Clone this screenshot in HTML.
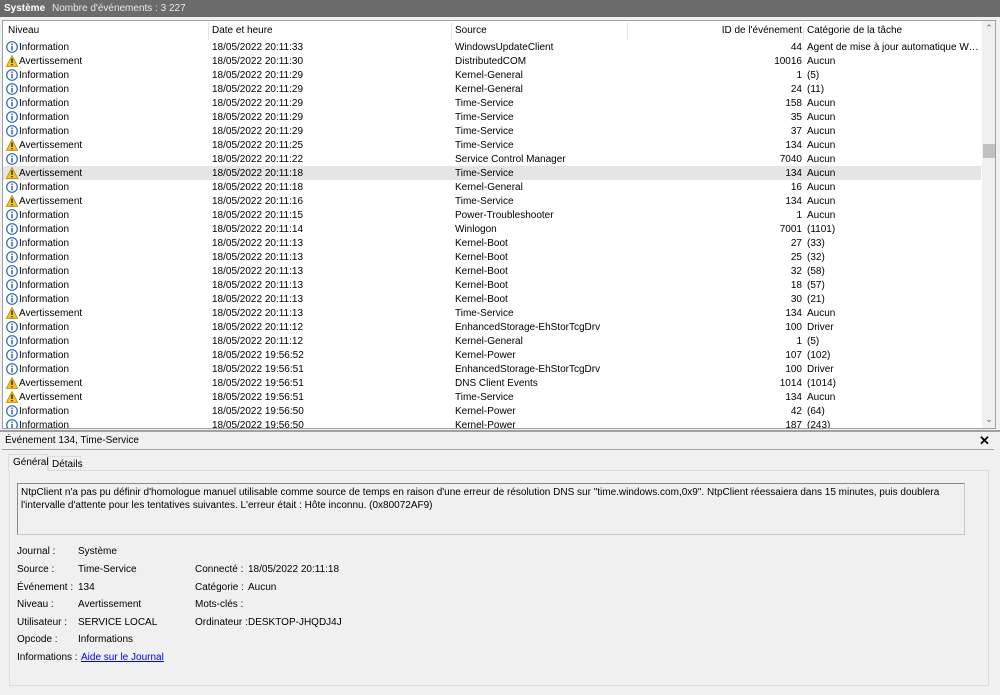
<!DOCTYPE html>
<html><head><meta charset="utf-8"><style>
*{margin:0;padding:0;box-sizing:border-box}
body{width:1000px;height:695px;background:#f0f0f0;font-family:"Liberation Sans",sans-serif;font-size:10px;color:#000;position:relative;overflow:hidden}
.tb{position:absolute;left:0;top:0;width:1000px;height:17px;background:#6b6b6b;color:#fff;line-height:17px}
.tb b{position:absolute;left:4px;font-weight:bold}
.tb span{position:absolute;left:52px;color:#e8e8e8}
.list{position:absolute;left:2px;top:20px;width:994px;height:409px;background:#fff;border:1px solid #a0a0a0;overflow:hidden}
.hd{position:absolute;left:0;top:1px;width:978px;height:18px;line-height:18px}
.hd span{position:absolute;top:0}
.sep{position:absolute;top:0;width:1px;height:18px;background:#e5e5e5}
.r{position:absolute;left:0;width:978px;height:14px;line-height:15px;white-space:nowrap}
.r span{position:absolute;top:0}
.r .n{left:16px}.r .d{left:209px}.r .s{left:452px}.r .i{right:179px;text-align:right}.r .c{left:804px;width:172px;overflow:hidden;text-overflow:ellipsis}
.hl{background:#e5e5e5}
.sb{position:absolute;left:979px;top:0;width:14px;height:407px;background:#f0f0f0}
.th{position:absolute;left:980px;top:123px;width:12px;height:14px;background:#c1c1c1}
.ar{position:absolute;left:979px;width:14px;text-align:center;font-size:9px;color:#606060}
.dt{position:absolute;left:0;top:430px;width:1000px;height:265px;border-top:2px solid #a0a0a0}
.lbl{position:absolute;white-space:nowrap}
a{color:#0000ee;text-decoration:underline}
</style></head><body>
<div class="tb"><b>Système</b><span>Nombre d'événements : 3 227</span></div>
<div class="list">
<div class="hd"><span style="left:5px">Niveau</span><div class="sep" style="left:205px"></div><span style="left:209px">Date et heure</span><div class="sep" style="left:448px"></div><span style="left:452px">Source</span><div class="sep" style="left:624px"></div><span style="right:179px">ID de l'événement</span><div class="sep" style="left:800px"></div><span style="left:804px">Catégorie de la tâche</span></div>
<svg width="0" height="0" style="position:absolute"><defs>
<g id="inf"><circle cx="6" cy="6" r="5.3" fill="#fff" stroke="#2a63b5" stroke-width="1.2"/><rect x="5.3" y="5" width="1.5" height="4.3" fill="#2a63b5"/><rect x="5.3" y="2.6" width="1.5" height="1.5" fill="#2a63b5"/></g>
<g id="wrn"><path d="M6 0.5L11.7 11.5H0.3Z" fill="#f5c518" stroke="#b8860b" stroke-width="0.8"/><rect x="5.3" y="3.5" width="1.4" height="4.5" fill="#222"/><rect x="5.3" y="9" width="1.4" height="1.4" fill="#222"/></g>
</defs></svg>
<div id="rows"></div>
<div class="sb"></div><div class="th"></div>
<div class="ar" style="top:2px">&#8963;</div><div class="ar" style="top:393px">&#8964;</div>
</div>
<div class="dt">
<div class="lbl" style="left:5px;top:3px">Événement 134, Time-Service</div>
<div class="lbl" style="left:979px;top:1px;font-weight:bold;font-size:13px">✕</div>
<div style="position:absolute;left:2px;top:17px;width:992px;height:1px;background:#a0a0a0"></div>
<div style="position:absolute;left:9px;top:38px;width:980px;height:216px;border:1px solid #dcdcdc;background:#f0f0f0"></div>
<div style="position:absolute;left:8px;top:22px;width:40px;height:17px;border:1px solid #dcdcdc;border-bottom:none;background:#f0f0f0"></div>
<div class="lbl" style="left:13px;top:25px">Général</div>
<div style="position:absolute;left:48px;top:24px;width:33px;height:15px;border:1px solid #dcdcdc;border-bottom:none"></div>
<div class="lbl" style="left:52px;top:27px">Détails</div>
<div style="position:absolute;left:17px;top:51px;width:948px;height:52px;border:1px solid #c8c8c8;border-top-color:#8a8a8a;border-left-color:#8a8a8a;padding:2px 3px;line-height:13px">NtpClient n'a pas pu définir d'homologue manuel utilisable comme source de temps en raison d'une erreur de résolution DNS sur "time.windows.com,0x9". NtpClient réessaiera dans 15 minutes, puis doublera l'intervalle d'attente pour les tentatives suivantes. L'erreur était : Hôte inconnu. (0x80072AF9)</div>
<div class="lbl" style="left:17px;top:114px">Journal :</div><div class="lbl" style="left:78px;top:114px">Système</div>
<div class="lbl" style="left:17px;top:132px">Source :</div><div class="lbl" style="left:78px;top:132px">Time-Service</div>
<div class="lbl" style="left:195px;top:132px">Connecté :</div><div class="lbl" style="left:248px;top:132px">18/05/2022 20:11:18</div>
<div class="lbl" style="left:17px;top:150px">Événement :</div><div class="lbl" style="left:78px;top:150px">134</div>
<div class="lbl" style="left:195px;top:150px">Catégorie :</div><div class="lbl" style="left:248px;top:150px">Aucun</div>
<div class="lbl" style="left:17px;top:167px">Niveau :</div><div class="lbl" style="left:78px;top:167px">Avertissement</div>
<div class="lbl" style="left:195px;top:167px">Mots-clés :</div>
<div class="lbl" style="left:17px;top:185px">Utilisateur :</div><div class="lbl" style="left:78px;top:185px">SERVICE LOCAL</div>
<div class="lbl" style="left:195px;top:185px">Ordinateur :</div><div class="lbl" style="left:248px;top:185px">DESKTOP-JHQDJ4J</div>
<div class="lbl" style="left:17px;top:202px">Opcode :</div><div class="lbl" style="left:78px;top:202px">Informations</div>
<div class="lbl" style="left:17px;top:220px">Informations :</div><div class="lbl" style="left:81px;top:220px"><a>Aide sur le Journal</a></div>
</div>
<script>
var d=[["I","18/05/2022 20:11:33","WindowsUpdateClient","44","Agent de mise à jour automatique Windows Update"],
["W","18/05/2022 20:11:30","DistributedCOM","10016","Aucun"],
["I","18/05/2022 20:11:29","Kernel-General","1","(5)"],
["I","18/05/2022 20:11:29","Kernel-General","24","(11)"],
["I","18/05/2022 20:11:29","Time-Service","158","Aucun"],
["I","18/05/2022 20:11:29","Time-Service","35","Aucun"],
["I","18/05/2022 20:11:29","Time-Service","37","Aucun"],
["W","18/05/2022 20:11:25","Time-Service","134","Aucun"],
["I","18/05/2022 20:11:22","Service Control Manager","7040","Aucun"],
["W","18/05/2022 20:11:18","Time-Service","134","Aucun"],
["I","18/05/2022 20:11:18","Kernel-General","16","Aucun"],
["W","18/05/2022 20:11:16","Time-Service","134","Aucun"],
["I","18/05/2022 20:11:15","Power-Troubleshooter","1","Aucun"],
["I","18/05/2022 20:11:14","Winlogon","7001","(1101)"],
["I","18/05/2022 20:11:13","Kernel-Boot","27","(33)"],
["I","18/05/2022 20:11:13","Kernel-Boot","25","(32)"],
["I","18/05/2022 20:11:13","Kernel-Boot","32","(58)"],
["I","18/05/2022 20:11:13","Kernel-Boot","18","(57)"],
["I","18/05/2022 20:11:13","Kernel-Boot","30","(21)"],
["W","18/05/2022 20:11:13","Time-Service","134","Aucun"],
["I","18/05/2022 20:11:12","EnhancedStorage-EhStorTcgDrv","100","Driver"],
["I","18/05/2022 20:11:12","Kernel-General","1","(5)"],
["I","18/05/2022 19:56:52","Kernel-Power","107","(102)"],
["I","18/05/2022 19:56:51","EnhancedStorage-EhStorTcgDrv","100","Driver"],
["W","18/05/2022 19:56:51","DNS Client Events","1014","(1014)"],
["W","18/05/2022 19:56:51","Time-Service","134","Aucun"],
["I","18/05/2022 19:56:50","Kernel-Power","42","(64)"],
["I","18/05/2022 19:56:50","Kernel-Power","187","(243)"]];
var h="";d.forEach(function(r,i){h+='<div class="r'+(i==9?' hl':'')+'" style="top:'+(19+i*14)+'px"><svg style="position:absolute;left:3px;top:1px" width="12" height="12"><use href="#'+(r[0]=="I"?"inf":"wrn")+'"/></svg><span class="n">'+(r[0]=="I"?"Information":"Avertissement")+'</span><span class="d">'+r[1]+'</span><span class="s">'+r[2]+'</span><span class="i">'+r[3]+'</span><span class="c">'+r[4]+'</span></div>';});
document.getElementById("rows").innerHTML=h;
</script>
</body></html>
